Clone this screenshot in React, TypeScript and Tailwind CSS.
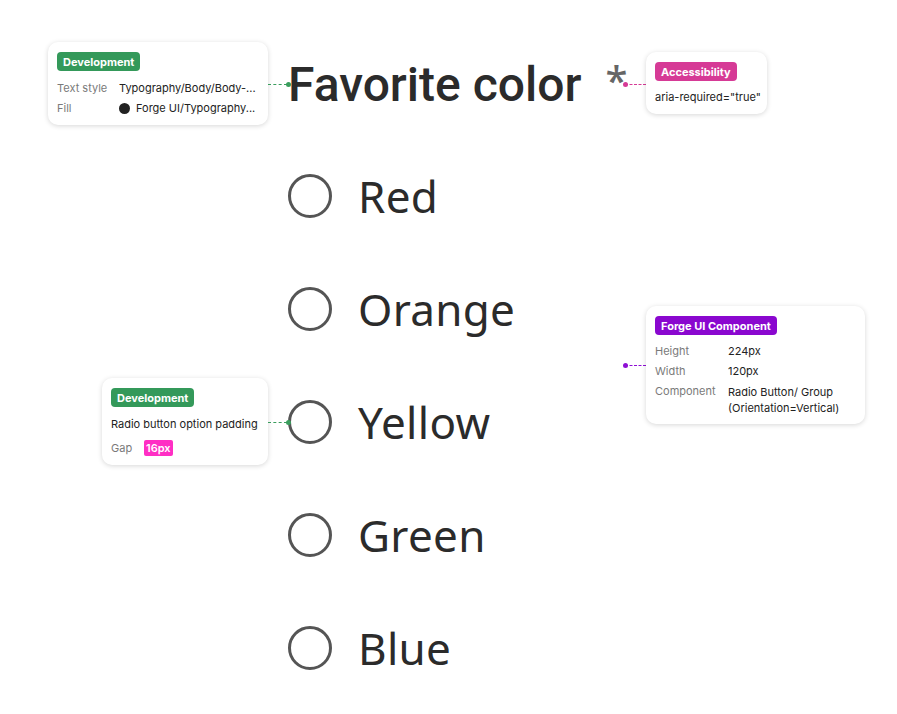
const options = ["Red", "Orange", "Yellow", "Green", "Blue"];

function Badge({ label, color }: { label: string; color: string }) {
  return (
    <span className={`inline-flex h-[19px] items-center rounded-[4px] px-[6px] text-[11px] font-bold text-white ${color}`}>
      {label}
    </span>
  );
}

const card =
  "absolute rounded-[10px] bg-white shadow-[0_1px_5px_rgba(0,0,0,0.16)] font-['Inter',sans-serif] text-[11px] leading-[14px] text-[#222] whitespace-nowrap";

export default function App() {
  return (
    <div className="relative h-[714px] w-[897px] overflow-hidden bg-white font-['Noto_Sans',sans-serif] text-[#2b2b2b]">
      {/* form */}
      <div className="flex flex-col pl-[288px] pt-[56px]">
        <div className="flex items-center">
          <h1 className="font-['Roboto',sans-serif] text-[48px] font-medium leading-[58px]">Favorite color</h1>
          <span className="ml-[24px] mt-[-10px] text-[40px] font-medium leading-[58px] text-[#666]">*</span>
        </div>
        <div className="mt-[60px] flex flex-col gap-[69px]">
          {options.map((o) => (
            <label key={o} className="flex h-[44px] items-center gap-[26px]">
              <span className="h-[44px] w-[44px] shrink-0 rounded-full border-[3px] border-[#555]" />
              <span className="text-[44px] leading-[44px] tracking-[0.3px]">{o}</span>
            </label>
          ))}
        </div>
      </div>

      {/* heading annotation */}
      <div className={`${card} left-[48px] top-[42px] w-[220px] px-[9px] pb-[10px] pt-[10px]`}>
        <Badge label="Development" color="bg-[#34995a]" />
        <div className="mt-[10px] grid grid-cols-[62px_1fr] gap-y-[6px]">
          <span className="text-[#7a7a7a]">Text style</span>
          <span>Typography/Body/Body-...</span>
          <span className="text-[#7a7a7a]">Fill</span>
          <span className="flex items-center gap-[6px]">
            <span className="h-[11px] w-[11px] rounded-full bg-[#222]" />
            Forge UI/Typography...
          </span>
        </div>
      </div>
      <div className="absolute left-[268px] top-[84px] w-[19px] border-t border-dashed border-[#3a9d5d]" />
      <div className="absolute left-[286px] top-[82px] h-[5px] w-[5px] rounded-full bg-[#3a9d5d]" />

      {/* asterisk annotation */}
      <div className="absolute left-[625px] top-[84px] w-[21px] border-t border-dashed border-[#d63a96]" />
      <div className="absolute left-[623px] top-[82px] h-[5px] w-[5px] rounded-full bg-[#d63a96]" />
      <div className={`${card} left-[646px] top-[52px] w-[121px] px-[9px] pb-[10px] pt-[10px]`}>
        <Badge label="Accessibility" color="bg-[#d63a96]" />
        <div className="mt-[9px]">aria-required="true"</div>
      </div>

      {/* padding annotation */}
      <div className={`${card} left-[102px] top-[378px] w-[166px] px-[9px] pb-[9px] pt-[10px]`}>
        <Badge label="Development" color="bg-[#34995a]" />
        <div className="mt-[10px]">Radio button option padding</div>
        <div className="mt-[9px] flex items-center">
          <span className="w-[33px] text-[#7a7a7a]">Gap</span>
          <span className="rounded-[2px] bg-[#ff2ec4] px-[2px] font-semibold leading-[16px] text-white">16px</span>
        </div>
      </div>
      <div className="absolute left-[268px] top-[422px] w-[19px] border-t border-dashed border-[#3a9d5d]" />
      <div className="absolute left-[286px] top-[420px] h-[5px] w-[5px] rounded-full bg-[#3a9d5d]" />

      {/* component annotation */}
      <div className="absolute left-[625px] top-[365px] w-[21px] border-t border-dashed border-[#8e0fd4]" />
      <div className="absolute left-[623px] top-[363px] h-[5px] w-[5px] rounded-full bg-[#8e0fd4]" />
      <div className={`${card} left-[646px] top-[306px] w-[219px] px-[9px] pb-[8px] pt-[10px]`}>
        <Badge label="Forge UI Component" color="bg-[#8a07cf]" />
        <div className="mt-[9px] grid grid-cols-[73px_1fr] gap-y-[6px] leading-[14px]">
          <span className="text-[#7a7a7a]">Height</span>
          <span>224px</span>
          <span className="text-[#7a7a7a]">Width</span>
          <span>120px</span>
          <span className="text-[#7a7a7a]">Component</span>
          <span className="leading-[16px]">
            Radio Button/ Group
            <br />
            (Orientation=Vertical)
          </span>
        </div>
      </div>
    </div>
  );
}
